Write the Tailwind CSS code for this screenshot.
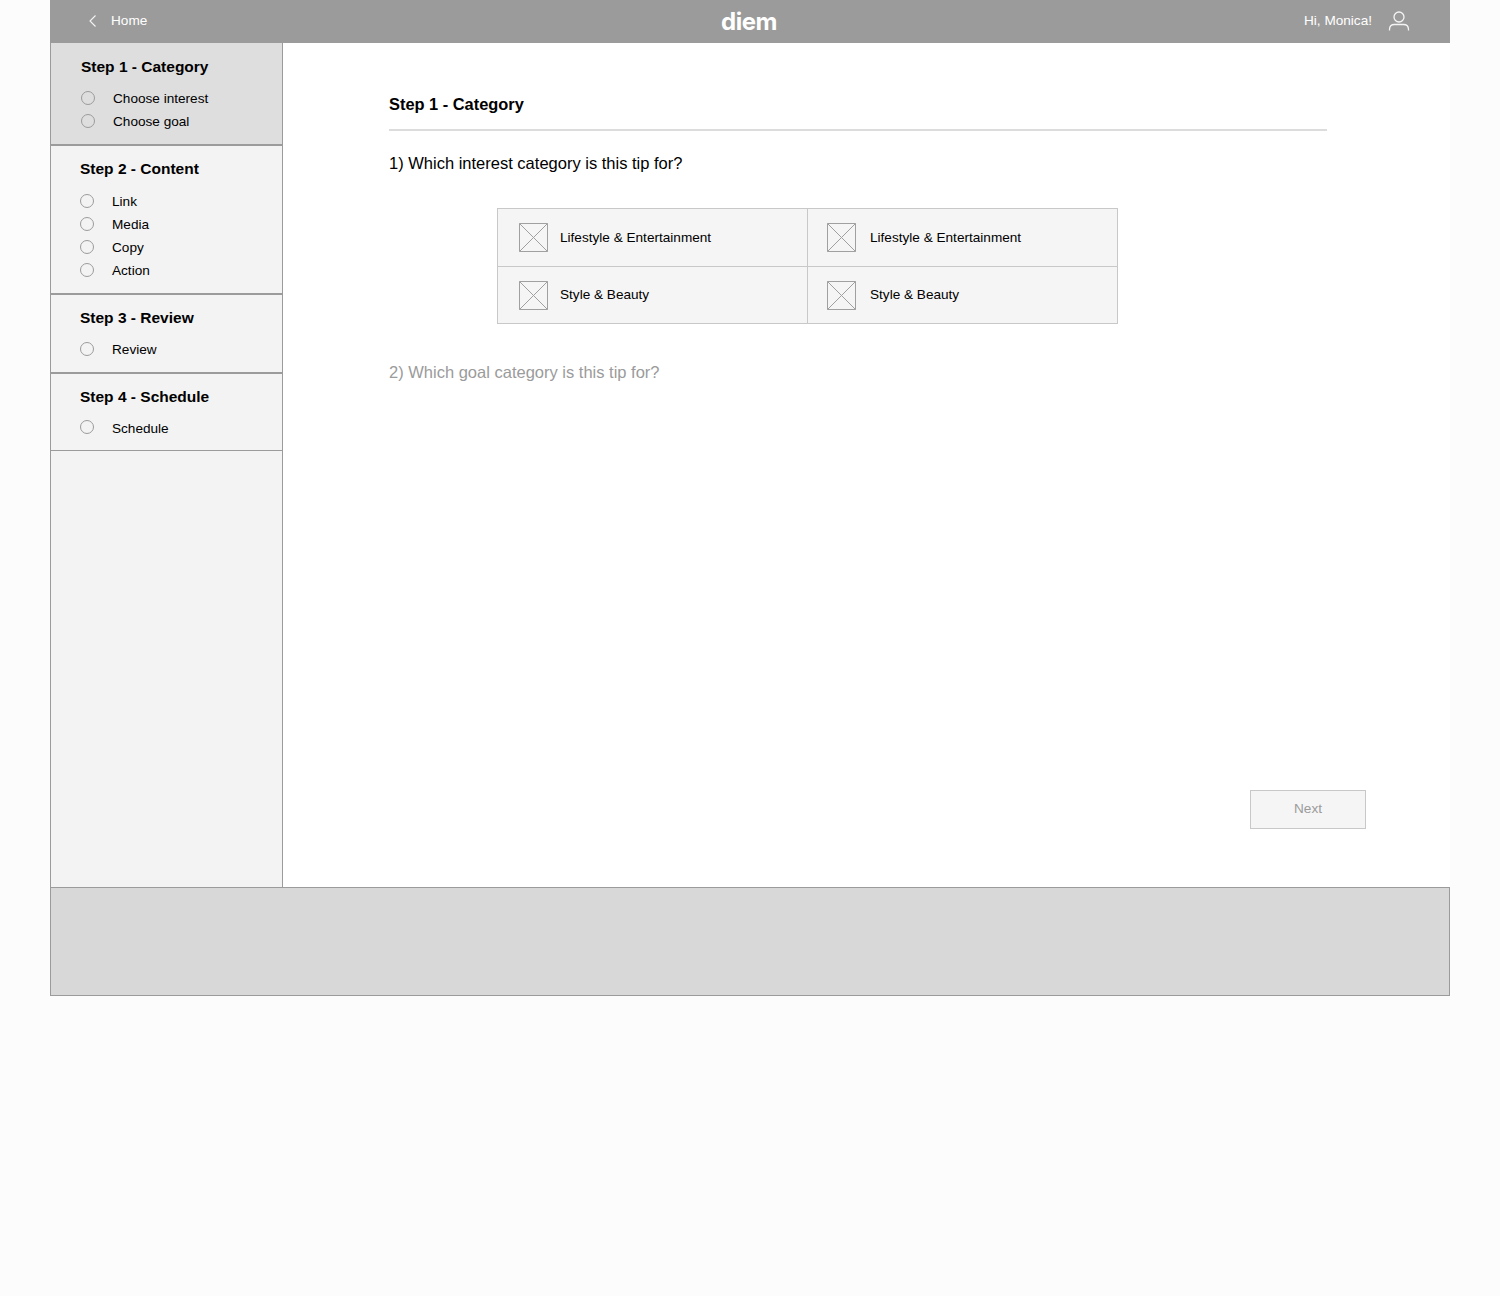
<!DOCTYPE html>
<html lang="en">
<head>
    <meta charset="UTF-8">
    <title>Diem - New tip</title>
    <script src="https://cdn.jsdelivr.net/npm/@tailwindcss/browser@4"></script>
</head>
<body class="bg-[#fcfcfc] font-['Liberation_Sans',Arial,sans-serif] text-black">
<div class="w-[1400px] ml-[50px]">

    <!-- Header -->
    <header class="h-[43px] bg-[#9b9b9b] text-white flex items-center justify-between text-[13.600px] relative">
        <div class="flex items-center pl-[38px] gap-[13px]">
            <svg class="mb-[1px]" width="10" height="12" viewBox="0 0 10 12" fill="none" stroke="#f4f4f4" stroke-width="1.100"><path d="M7.500.5L2 6l5.500 5.500"/></svg>
            <span>Home</span>
        </div>
        <div class="absolute left-[671px] top-[7px] font-['Inter',sans-serif] font-bold text-[24px] leading-[30px] tracking-[-0.5px]">diem</div>
        <div class="flex items-center pr-[40px]">
            <span>Hi, Monica!</span>
            <svg class="ml-[16px] mb-[1px]" width="22" height="22" viewBox="0 0 22 22" fill="none" stroke="#f4f4f4" stroke-width="1.300"><circle cx="11" cy="7" r="5"/><path d="M1.500 20.500v-1c0-3 2-5 5-5h9c3 0 5 2 5 5v1"/></svg>
        </div>
    </header>

    <!-- Body -->
    <div class="flex h-[844px]">
        <aside class="w-[233px] bg-[#f3f3f3] border-x border-[#9b9b9b]">
            <section class="h-[103px] bg-[#dedede] border-b-2 border-[#9b9b9b] pl-[30px] pt-[14px]">
                <h2 class="font-bold text-[15.500px] leading-[20px] mb-[9px]">Step 1 - Category</h2>
                <ul class="text-[13.600px]">
                    <li class="flex items-center h-[23.500px] gap-[18px]"><span class="w-[14px] h-[14px] rounded-full border border-[#9b9b9b]"></span><span class="pt-[2px]">Choose interest</span></li>
                    <li class="flex items-center h-[23.500px] gap-[18px]"><span class="w-[14px] h-[14px] rounded-full border border-[#9b9b9b]"></span><span class="pt-[2px]">Choose goal</span></li>
                </ul>
            </section>
            <section class="h-[149px] border-b-2 border-[#9b9b9b] pl-[29px] pt-[13px]">
                <h2 class="font-bold text-[15.500px] leading-[20px] mb-[10px]">Step 2 - Content</h2>
                <ul class="text-[13.600px]">
                    <li class="flex items-center h-[23px] gap-[18px]"><span class="w-[14px] h-[14px] rounded-full border border-[#9b9b9b]"></span><span class="pt-[3px]">Link</span></li>
                    <li class="flex items-center h-[23px] gap-[18px]"><span class="w-[14px] h-[14px] rounded-full border border-[#9b9b9b]"></span><span class="pt-[3px]">Media</span></li>
                    <li class="flex items-center h-[23px] gap-[18px]"><span class="w-[14px] h-[14px] rounded-full border border-[#9b9b9b]"></span><span class="pt-[3px]">Copy</span></li>
                    <li class="flex items-center h-[23px] gap-[18px]"><span class="w-[14px] h-[14px] rounded-full border border-[#9b9b9b]"></span><span class="pt-[3px]">Action</span></li>
                </ul>
            </section>
            <section class="h-[79px] border-b-2 border-[#9b9b9b] pl-[29px] pt-[13px]">
                <h2 class="font-bold text-[15.500px] leading-[20px] mb-[9px]">Step 3 - Review</h2>
                <ul class="text-[13.600px]">
                    <li class="flex items-center h-[23px] gap-[18px]"><span class="w-[14px] h-[14px] rounded-full border border-[#9b9b9b]"></span><span class="pt-[3px]">Review</span></li>
                </ul>
            </section>
            <section class="h-[77px] border-b border-[#9b9b9b] pl-[29px] pt-[13px]">
                <h2 class="font-bold text-[15.500px] leading-[20px] mb-[9px]">Step 4 - Schedule</h2>
                <ul class="text-[13.600px]">
                    <li class="flex items-center h-[23px] gap-[18px]"><span class="w-[14px] h-[14px] mb-[2px] rounded-full border border-[#9b9b9b]"></span><span class="pt-[3px]">Schedule</span></li>
                </ul>
            </section>
        </aside>

        <main class="flex-1 bg-white flex flex-col pl-[106px] pr-[84px] pb-[58px]">
            <h1 class="font-bold text-[16.400px] leading-[20px] mt-[51px]">Step 1 - Category</h1>
            <div class="h-[2px] w-[938px] bg-[#dcdcdc] mt-[15px]"></div>
            <p class="text-[16.500px] leading-[22px] mt-[21px]">1) Which interest category is this tip for?</p>
            <div class="grid grid-cols-2 w-[621px] ml-[108px] mt-[34px] bg-[#f5f5f5] border border-[#c8c8c8] text-[13.600px]">
                <div class="h-[58px] flex items-center pl-[21px] gap-[12px] border-r border-b border-[#c8c8c8]">
                    <svg width="29" height="29" viewBox="0 0 29 29" fill="none" stroke="#a0a0a0"><path d="M.5.500h28v28H.5zM.5.500l28 28M28.500.500l-28 28"/></svg>
                    <span class="pt-[1px]">Lifestyle &amp; Entertainment</span>
                </div>
                <div class="h-[58px] flex items-center pl-[19px] gap-[14.500px] border-b border-[#c8c8c8]">
                    <svg width="29" height="29" viewBox="0 0 29 29" fill="none" stroke="#a0a0a0"><path d="M.5.500h28v28H.5zM.5.500l28 28M28.500.500l-28 28"/></svg>
                    <span class="pt-[1px]">Lifestyle &amp; Entertainment</span>
                </div>
                <div class="h-[56px] flex items-center pl-[21px] gap-[12px] border-r border-[#c8c8c8]">
                    <svg width="29" height="29" viewBox="0 0 29 29" fill="none" stroke="#a0a0a0"><path d="M.5.500h28v28H.5zM.5.500l28 28M28.500.500l-28 28"/></svg>
                    <span>Style &amp; Beauty</span>
                </div>
                <div class="h-[56px] flex items-center pl-[19px] gap-[14.500px]">
                    <svg width="29" height="29" viewBox="0 0 29 29" fill="none" stroke="#a0a0a0"><path d="M.5.500h28v28H.5zM.5.500l28 28M28.500.500l-28 28"/></svg>
                    <span>Style &amp; Beauty</span>
                </div>
            </div>
            <p class="text-[16.500px] leading-[22px] mt-[37px] text-[#9b9b9b]">2) Which goal category is this tip for?</p>
            <button class="mt-auto self-end w-[116px] h-[39px] bg-[#f5f5f5] border border-[#c8c8c8] text-[13.600px] text-[#9b9b9b] pb-[1px]">Next</button>
        </main>
    </div>

    <!-- Footer -->
    <footer class="h-[109px] bg-[#d8d8d8] border border-[#9b9b9b]"></footer>
</div>
</body>
</html>
